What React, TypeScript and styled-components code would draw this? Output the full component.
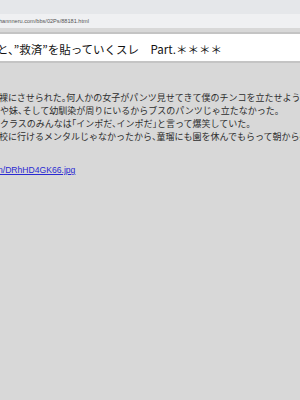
import styled, { createGlobalStyle } from "styled-components";

const Global = createGlobalStyle`
  html, body {
    margin: 0;
    padding: 0;
    background: #d8d8d8;
  }
  body {
    width: 300px;
    height: 400px;
    overflow: hidden;
    font-family: "Noto Sans CJK JP", "Liberation Sans", sans-serif;
  }
`;

const Page = styled.div`
  width: 300px;
  height: 400px;
  overflow: hidden;
  display: flex;
  flex-direction: column;
  background: #d8d8d8;
`;

const Chrome = styled.div`
  height: 14px;
  background: #e5e7ea;
`;

const UrlBar = styled.div`
  height: 14px;
  background: #eff0f2;
  display: flex;
  align-items: center;
  overflow: hidden;
`;

const Url = styled.span`
  font-family: "Liberation Sans", sans-serif;
  font-size: 5.6px;
  color: #555;
  white-space: nowrap;
  margin-left: -1px;
`;

const TitleWrap = styled.div`
  margin-top: 4px;
  border-top: 2px solid #c4c4c4;
  border-bottom: 2px solid #c4c4c4;
  background: #fff;
  height: 31px;
  padding-top: 3px;
  box-sizing: border-box;
  display: flex;
  align-items: center;
  overflow: hidden;
`;

const Title = styled.h1`
  margin: 0 0 0 -3px;
  font-size: 11.5px;
  font-weight: 400;
  color: #111;
  white-space: nowrap;
  font-feature-settings: "halt";
`;

const Post = styled.div`
  padding-top: 28px;
  display: flex;
  flex-direction: column;
  overflow: hidden;
`;

const Line = styled.div<{ $shift?: number }>`
  margin-left: ${(p) => p.$shift ?? 0}px;
  font-size: 9px;
  line-height: 13px;
  color: #2e2e2e;
  white-space: nowrap;
  font-feature-settings: "halt";
`;

const Gap = styled.div`
  height: 21px;
`;

const Link = styled.a`
  margin-left: -2px;
  font-family: "Liberation Sans", sans-serif;
  font-size: 8.6px;
  line-height: 12px;
  color: #2a2ad2;
  text-decoration: underline;
  white-space: nowrap;
`;

export default function App() {
  return (
    <>
      <Global />
      <Page>
        <Chrome />
        <UrlBar>
          <Url>hannneru.com/bbs/02Ps/88181.html</Url>
        </UrlBar>
        <TitleWrap>
          <Title>と、”救済”を貼っていくスレ　Part.＊＊＊＊</Title>
        </TitleWrap>
        <Post>
          <Line $shift={-1}>
            裸にさせられた。何人かの女子がパンツ見せてきて僕のチンコを立たせようとした
          </Line>
          <Line>や妹、そして幼馴染が周りにいるからブスのパンツじゃ立たなかった。</Line>
          <Line>クラスのみんなは「インポだ、インポだ」と言って爆笑していた。</Line>
          <Line $shift={-1}>
            校に行けるメンタルじゃなかったから、童瑠にも園を休んでもらって朝から慰めてもらった。
          </Line>
          <Gap />
          <Link href="#">n/DRhHD4GK66.jpg</Link>
        </Post>
      </Page>
    </>
  );
}
